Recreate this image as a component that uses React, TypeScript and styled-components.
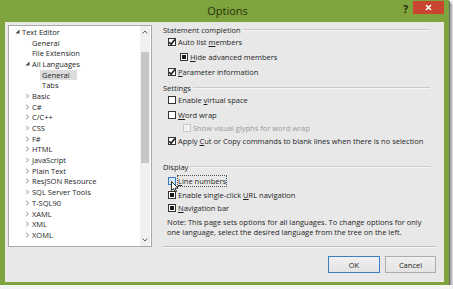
import React from "react";
import styled, { createGlobalStyle } from "styled-components";

const GlobalStyle = createGlobalStyle`
    html, body {
        margin: 0;
        padding: 0;
        background: #f4f4f4;
        overflow: hidden;
    }
    body {
        font-family: "Open Sans", "Noto Sans", sans-serif;
        color: #1e1e1e;
    }
`;

/**
 * tree data
 */
interface TreeNode {
    label: string;
    level: number;
    arrow?: "open" | "closed";
    selected?: boolean;
}

const treeNodes: TreeNode[] = [
    { label: "Text Editor", level: 0, arrow: "open" },
    { label: "General", level: 1 },
    { label: "File Extension", level: 1 },
    { label: "All Languages", level: 1, arrow: "open" },
    { label: "General", level: 2, selected: true },
    { label: "Tabs", level: 2 },
    { label: "Basic", level: 1, arrow: "closed" },
    { label: "C#", level: 1, arrow: "closed" },
    { label: "C/C++", level: 1, arrow: "closed" },
    { label: "CSS", level: 1, arrow: "closed" },
    { label: "F#", level: 1, arrow: "closed" },
    { label: "HTML", level: 1, arrow: "closed" },
    { label: "JavaScript", level: 1, arrow: "closed" },
    { label: "Plain Text", level: 1, arrow: "closed" },
    { label: "ResJSON Resource", level: 1, arrow: "closed" },
    { label: "SQL Server Tools", level: 1, arrow: "closed" },
    { label: "T-SQL90", level: 1, arrow: "closed" },
    { label: "XAML", level: 1, arrow: "closed" },
    { label: "XML", level: 1, arrow: "closed" },
    { label: "XOML", level: 1, arrow: "closed" },
];

type CheckState = "checked" | "square" | "none";

const CheckBox = ({ state, disabled, hover }: { state: CheckState; disabled?: boolean; hover?: boolean }) => (
    <StyledBox disabled={disabled} hover={hover}>
        {state === "checked" && (
            <svg width="8" height="8" viewBox="0 0 8 8">
                <path d="M1.2 4.2 L3.1 6.2 L6.9 1.4" fill="none" stroke="#1a1a1a" strokeWidth="1.6" />
            </svg>
        )}
        {state === "square" && <StyledSquare />}
    </StyledBox>
);

const GroupHeader = ({ title, top }: { title: string; top: number }) => (
    <StyledGroupHeader top={top}>
        <span>{title}</span>
        <StyledGroupLine />
    </StyledGroupHeader>
);

export default function App() {
    return (
        <>
            <GlobalStyle />
            <StyledWindow>
                <StyledTitleBar>
                    <StyledTitle>Options</StyledTitle>
                    <StyledHelp>?</StyledHelp>
                    <StyledClose>
                        <svg width="7" height="7" viewBox="0 0 7 7">
                            <path d="M1 1 L6 6 M6 1 L1 6" stroke="#fff" strokeWidth="1.5" />
                        </svg>
                    </StyledClose>
                </StyledTitleBar>
                <StyledBody>
                    <StyledTree>
                        <StyledTreeList>
                            {treeNodes.map((node, index) => (
                                <StyledTreeRow key={index} level={node.level}>
                                    <StyledArrow>
                                        {node.arrow === "open" && (
                                            <svg width="5" height="5" viewBox="0 0 5 5">
                                                <path d="M4.5 0.5 L4.5 4.5 L0.5 4.5 Z" fill="#444" />
                                            </svg>
                                        )}
                                        {node.arrow === "closed" && (
                                            <svg width="5" height="6" viewBox="0 0 5 6">
                                                <path d="M1 0.8 L3.6 3 L1 5.2" fill="none" stroke="#8a8a8a" strokeWidth="0.9" />
                                            </svg>
                                        )}
                                    </StyledArrow>
                                    <StyledTreeLabel selected={node.selected}>{node.label}</StyledTreeLabel>
                                </StyledTreeRow>
                            ))}
                        </StyledTreeList>
                        <StyledScrollBar>
                            <StyledScrollArrow>
                                <svg width="6" height="4" viewBox="0 0 6 4">
                                    <path d="M0.6 3.4 L3 1 L5.4 3.4" fill="none" stroke="#606060" strokeWidth="1" />
                                </svg>
                            </StyledScrollArrow>
                            <StyledScrollTrack>
                                <StyledScrollThumb />
                            </StyledScrollTrack>
                            <StyledScrollArrow>
                                <svg width="6" height="4" viewBox="0 0 6 4">
                                    <path d="M0.6 0.6 L3 3 L5.4 0.6" fill="none" stroke="#606060" strokeWidth="1" />
                                </svg>
                            </StyledScrollArrow>
                        </StyledScrollBar>
                    </StyledTree>

                    <StyledPane>
                        <GroupHeader title="Statement completion" top={0} />
                        <StyledOption top={2} indent={0}>
                            <CheckBox state="checked" />
                            <span>
                                Auto list <u>m</u>embers
                            </span>
                        </StyledOption>
                        <StyledOption top={5} indent={12}>
                            <CheckBox state="square" />
                            <span>
                                <u>H</u>ide advanced members
                            </span>
                        </StyledOption>
                        <StyledOption top={5} indent={0}>
                            <CheckBox state="checked" />
                            <span>
                                <u>P</u>arameter information
                            </span>
                        </StyledOption>

                        <GroupHeader title="Settings" top={6} />
                        <StyledOption top={2} indent={0}>
                            <CheckBox state="none" />
                            <span>
                                Enable <u>v</u>irtual space
                            </span>
                        </StyledOption>
                        <StyledOption top={5} indent={0}>
                            <CheckBox state="none" />
                            <span>
                                <u>W</u>ord wrap
                            </span>
                        </StyledOption>
                        <StyledOption top={3} indent={15} disabled>
                            <CheckBox state="none" disabled />
                            <span>Show visual glyphs for word wrap</span>
                        </StyledOption>
                        <StyledOption top={3} indent={0}>
                            <CheckBox state="checked" />
                            <span>
                                Apply <u>C</u>ut or Copy commands to blank lines when there is no selection
                            </span>
                        </StyledOption>

                        <GroupHeader title="Display" top={16} />
                        <StyledOption top={4} indent={0}>
                            <CheckBox state="none" hover />
                            <StyledFocus>
                                <u>L</u>ine numbers
                            </StyledFocus>
                            <StyledCursor width="8" height="12" viewBox="0 0 8 12">
                                <path d="M0.5 0.5 L0.5 9.5 L2.6 7.6 L4.2 11.2 L5.6 10.6 L4 7.1 L7 7.1 Z" fill="#fff" stroke="#000" strokeWidth="0.8" />
                            </StyledCursor>
                        </StyledOption>
                        <StyledOption top={4} indent={0}>
                            <CheckBox state="square" />
                            <span>
                                Enable single-click <u>U</u>RL navigation
                            </span>
                        </StyledOption>
                        <StyledOption top={3} indent={0}>
                            <CheckBox state="square" />
                            <span>
                                <u>N</u>avigation bar
                            </span>
                        </StyledOption>
                        <StyledNote>
                            Note: This page sets options for all languages. To change options for only
                            <br />
                            one language, select the desired language from the tree on the left.
                        </StyledNote>

                        <StyledSpacer />
                        <StyledSeparator />
                        <StyledButtonRow>
                            <StyledButton primary>OK</StyledButton>
                            <StyledButton>Cancel</StyledButton>
                        </StyledButtonRow>
                    </StyledPane>
                </StyledBody>
            </StyledWindow>
        </>
    );
}

/**
 * styled-components 정의 영역
 */
const StyledWindow = styled.div`
    width: 449px;
    height: 285px;
    box-sizing: border-box;
    background: #7fa33d;
    padding: 0 5px 3px 5px;
    display: flex;
    flex-direction: column;
    box-shadow: 1px 1px 0 #6b6b6b, 3px 3px 2px rgba(0, 0, 0, 0.35);
`;
const StyledTitleBar = styled.div`
    position: relative;
    height: 22px;
    flex-shrink: 0;
    display: flex;
    align-items: center;
    justify-content: center;
`;
const StyledTitle = styled.div`
    font-size: 11px;
    color: #24330c;
    padding-bottom: 1px;
    margin-left: 6px;
`;
const StyledHelp = styled.div`
    position: absolute;
    right: 36px;
    top: 2px;
    font-size: 10px;
    font-weight: 700;
    color: #1d2a08;
`;
const StyledClose = styled.div`
    position: absolute;
    right: 0;
    top: 1px;
    width: 31px;
    height: 13px;
    background: #c9452f;
    display: flex;
    align-items: center;
    justify-content: center;
`;
const StyledBody = styled.div`
    flex: 1;
    background: #e8e8e8;
    display: flex;
    padding: 3px 8px 6px 3px;
    gap: 10px;
    min-height: 0;
`;
const StyledTree = styled.div`
    width: 144px;
    height: 222px;
    flex-shrink: 0;
    box-sizing: border-box;
    border: 1px solid #a9a9a9;
    background: #fff;
    display: flex;
    overflow: hidden;
`;
const StyledTreeList = styled.div`
    flex: 1;
    padding: 0 0 0 3px;
    overflow: hidden;
`;
const StyledTreeRow = styled.div<{ level: number }>`
    height: 10.7px;
    display: flex;
    align-items: center;
    padding-left: ${({ level }) => level * 10}px;
    font-size: 7.5px;
    white-space: nowrap;
    &:first-child {
        margin-top: 0.5px;
    }
`;
const StyledArrow = styled.div`
    width: 10px;
    height: 10px;
    flex-shrink: 0;
    display: flex;
    align-items: center;
    justify-content: center;
`;
const StyledTreeLabel = styled.div<{ selected?: boolean }>`
    padding: 0 2px;
    margin-left: -2px;
    line-height: 10px;
    background: ${({ selected }) => (selected ? "#dcdcdc" : "transparent")};
    ${({ selected }) => (selected ? "padding-right: 7px;" : "")}
`;
const StyledScrollBar = styled.div`
    width: 10px;
    margin-right: 1px;
    display: flex;
    flex-direction: column;
    background: #f0f0f0;
`;
const StyledScrollArrow = styled.div`
    height: 12px;
    display: flex;
    align-items: center;
    justify-content: center;
`;
const StyledScrollTrack = styled.div`
    flex: 1;
    padding-top: 14px;
`;
const StyledScrollThumb = styled.div`
    margin: 0 1px;
    height: 111px;
    background: #c6c6c6;
`;
const StyledPane = styled.div`
    flex: 1;
    display: flex;
    flex-direction: column;
    font-size: 7.5px;
    white-space: nowrap;
`;
const StyledGroupHeader = styled.div<{ top: number }>`
    margin-top: ${({ top }) => top}px;
    height: 10px;
    display: flex;
    align-items: center;
    gap: 2px;
    padding-left: 1px;
    padding-right: 6px;
`;
const StyledGroupLine = styled.div`
    flex: 1;
    height: 0;
    border-top: 1px solid #cacaca;
    border-bottom: 1px solid #f6f6f6;
`;
const StyledOption = styled.div<{ top: number; indent: number; disabled?: boolean }>`
    position: relative;
    margin-top: ${({ top }) => top}px;
    margin-left: ${({ indent }) => 6 + indent}px;
    height: 10px;
    display: flex;
    align-items: center;
    gap: 2px;
    color: ${({ disabled }) => (disabled ? "#9a9a9a" : "#1e1e1e")};
    u {
        text-underline-offset: 1px;
    }
`;
const StyledBox = styled.div<{ disabled?: boolean; hover?: boolean }>`
    width: 8px;
    height: 8px;
    box-sizing: border-box;
    border: 1px solid ${({ disabled, hover }) => (disabled ? "#c8c8c8" : hover ? "#3d7bbf" : "#333")};
    background: ${({ disabled, hover }) => (disabled ? "#f1f1f1" : hover ? "#d7e8fa" : "#fff")};
    display: flex;
    align-items: center;
    justify-content: center;
    flex-shrink: 0;
    svg {
        margin: -1px;
    }
`;
const StyledSquare = styled.div`
    width: 4px;
    height: 4px;
    background: #1a1a1a;
`;
const StyledFocus = styled.span`
    outline: 1px dotted #555;
    outline-offset: 0;
`;
const StyledCursor = styled.svg`
    position: absolute;
    left: 3px;
    top: 5px;
`;
const StyledNote = styled.div`
    margin-top: 5px;
    margin-left: 5px;
    line-height: 9.5px;
`;
const StyledSpacer = styled.div`
    flex: 1;
`;
const StyledSeparator = styled.div`
    height: 0;
    margin-left: 1px;
    border-top: 1px solid #bdbdbd;
    border-bottom: 1px solid #f7f7f7;
`;
const StyledButtonRow = styled.div`
    display: flex;
    justify-content: flex-end;
    gap: 5px;
    margin-top: 8px;
    margin-bottom: 3px;
`;
const StyledButton = styled.div<{ primary?: boolean }>`
    width: ${({ primary }) => (primary ? 52 : 51)}px;
    height: 17px;
    box-sizing: border-box;
    border: 1px solid ${({ primary }) => (primary ? "#3c7fc1" : "#adadad")};
    background: linear-gradient(#f0f0f0, #e3e3e3);
    display: flex;
    align-items: center;
    justify-content: center;
    font-size: 7.5px;
    color: #1e1e1e;
`;
